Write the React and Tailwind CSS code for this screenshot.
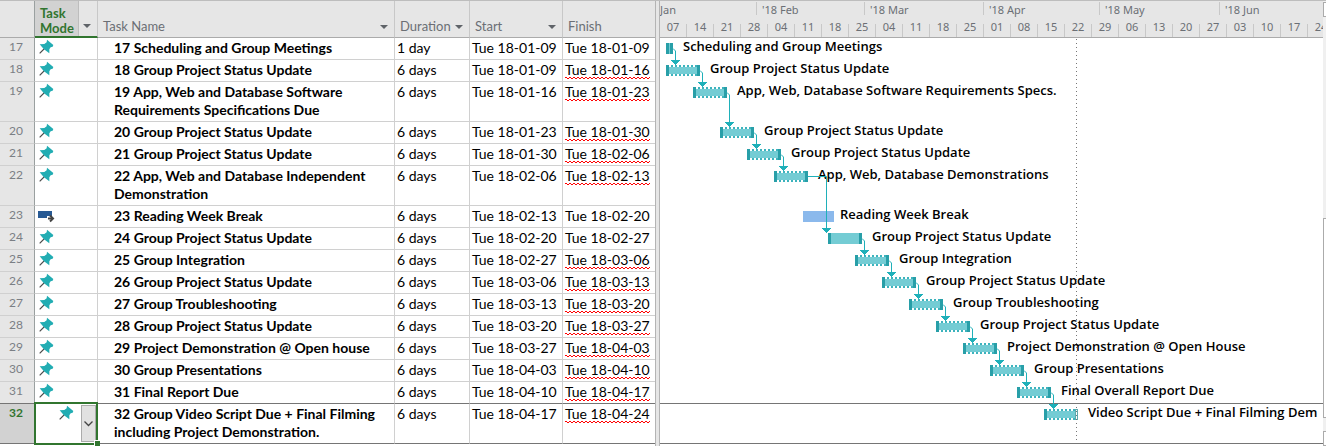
import React from "react";

const TASKS = [
  { id: 17, name: "17 Scheduling and Group Meetings", days: "1 day", start: "Tue 18-01-09", finish: "Tue 18-01-09", x: 6, w: 7, kind: "short", label: "Scheduling and Group Meetings" },
  { id: 18, name: "18 Group Project Status Update", days: "6 days", start: "Tue 18-01-09", finish: "Tue 18-01-16", warn: true, x: 6, w: 34, kind: "dotted", label: "Group Project Status Update" },
  { id: 19, name: "19 App, Web and Database Software Requirements Specifications Due", tall: true, days: "6 days", start: "Tue 18-01-16", finish: "Tue 18-01-23", warn: true, x: 33, w: 34, kind: "dotted", label: "App, Web, Database Software Requirements Specs." },
  { id: 20, name: "20 Group Project Status Update", days: "6 days", start: "Tue 18-01-23", finish: "Tue 18-01-30", warn: true, x: 60, w: 34, kind: "dotted", label: "Group Project Status Update" },
  { id: 21, name: "21 Group Project Status Update", days: "6 days", start: "Tue 18-01-30", finish: "Tue 18-02-06", warn: true, x: 87, w: 34, kind: "dotted", label: "Group Project Status Update" },
  { id: 22, name: "22 App, Web and Database Independent Demonstration", tall: true, days: "6 days", start: "Tue 18-02-06", finish: "Tue 18-02-13", warn: true, x: 114, w: 34, kind: "dotted", label: "App, Web, Database Demonstrations" },
  { id: 23, name: "23 Reading Week Break", auto: true, days: "6 days", start: "Tue 18-02-13", finish: "Tue 18-02-20", x: 143, w: 31, kind: "auto", label: "Reading Week Break" },
  { id: 24, name: "24 Group Project Status Update", days: "6 days", start: "Tue 18-02-20", finish: "Tue 18-02-27", x: 168, w: 34, kind: "solid", label: "Group Project Status Update" },
  { id: 25, name: "25 Group Integration", days: "6 days", start: "Tue 18-02-27", finish: "Tue 18-03-06", warn: true, x: 195, w: 34, kind: "dotted", label: "Group Integration" },
  { id: 26, name: "26 Group Project Status Update", days: "6 days", start: "Tue 18-03-06", finish: "Tue 18-03-13", warn: true, x: 222, w: 34, kind: "dotted", label: "Group Project Status Update" },
  { id: 27, name: "27 Group Troubleshooting", days: "6 days", start: "Tue 18-03-13", finish: "Tue 18-03-20", warn: true, x: 249, w: 34, kind: "dotted", label: "Group Troubleshooting" },
  { id: 28, name: "28 Group Project Status Update", days: "6 days", start: "Tue 18-03-20", finish: "Tue 18-03-27", warn: true, x: 276, w: 34, kind: "dotted", label: "Group Project Status Update" },
  { id: 29, name: "29 Project Demonstration @ Open house", days: "6 days", start: "Tue 18-03-27", finish: "Tue 18-04-03", warn: true, x: 303, w: 34, kind: "dotted", label: "Project Demonstration @ Open House" },
  { id: 30, name: "30 Group Presentations", days: "6 days", start: "Tue 18-04-03", finish: "Tue 18-04-10", warn: true, x: 330, w: 34, kind: "dotted", label: "Group Presentations" },
  { id: 31, name: "31 Final Report Due", days: "6 days", start: "Tue 18-04-10", finish: "Tue 18-04-17", warn: true, x: 357, w: 34, kind: "dotted", label: "Final Overall Report Due" },
  { id: 32, name: "32 Group Video Script Due + Final Filming including Project Demonstration.", tall: true, selected: true, days: "6 days", start: "Tue 18-04-17", finish: "Tue 18-04-24", warn: true, x: 384, w: 34, kind: "open", label: "Video Script Due + Final Filming Dem" },
];

const MONTHS = [
  ["Jan", "w-[96px]"],
  ["'18 Feb", "w-[108px]"],
  ["'18 Mar", "w-[119px]"],
  ["'18 Apr", "w-[116px]"],
  ["'18 May", "w-[120px]"],
  ["'18 Jun", "w-[120px]"],
];

const WEEKS = ["07", "14", "21", "28", "04", "11", "18", "25", "04", "11", "18", "25", "01", "08", "15", "22", "29", "06", "13", "20", "27", "03", "10", "17", "24"];

const rowHeight = (t) => (t.tall ? 40 : 22);
const TOPS = TASKS.reduce((tops, t) => [...tops, tops[tops.length - 1] + rowHeight(t)], [0]);

// Finish-to-start links as pairs of task ids; the break week is skipped.
const LINKS = TASKS.slice(1)
  .filter((t) => !t.auto)
  .map((t) => [t.id === 24 ? 22 : t.id - 1, t.id]);

function Pin({ className = "" }) {
  return (
    <svg className={`block ${className}`} width="16" height="16" viewBox="0 0 48 48" aria-label="Manually scheduled" role="img">
      <path d="M5 43L21 27" stroke="#4a4a4a" strokeWidth="3.5" />
      <path d="M27 2L46 18L44 23L38 25L34 31L34 43L22 34L17 30L5 16L19 15L26 10Z" fill="#22adb3" />
    </svg>
  );
}

function AutoIcon() {
  return (
    <svg className="block" width="17" height="12" viewBox="0 0 17 12" aria-label="Auto scheduled" role="img">
      <path d="M0 0H14V5H9V7H0Z" fill="#285a94" />
      <path d="M10 7.500H15" stroke="#444" strokeWidth="2" />
      <path d="M12 4.500L15 7.500L12 10.500" fill="none" stroke="#444" strokeWidth="2" />
    </svg>
  );
}

function FilterButton({ label }) {
  return (
    <button type="button" aria-label={label} className="mb-[6px] mr-[6px] flex h-2 w-2 shrink-0 items-center justify-center">
      <svg width="8" height="4" viewBox="0 0 8 4"><path d="M0 0H8L4 4Z" fill="#5f6368" /></svg>
    </button>
  );
}

function HeaderCell({ children, last }) {
  return (
    <th scope="col" className={`border-b border-b-[#ababab] p-0 font-normal ${last ? "" : "border-r border-r-[#c8c8c8]"}`}>
      <div className="flex h-9 items-end justify-between pl-[5px]">
        <span className="mb-[2px] leading-[18px]">{children}</span>
        {!last && <FilterButton label={`Filter ${children}`} />}
      </div>
    </th>
  );
}

function TaskRow({ task, darkLine }) {
  const line = darkLine ? "border-b-[#757575]" : "border-b-[#d0d0d0]";
  const cell = `whitespace-nowrap border-b border-r border-r-[#d0d0d0] p-0 pt-px pl-[2px] ${line}`;
  return (
    <tr className={`align-top ${task.tall ? "h-10" : "h-[22px]"}`}>
      <th
        scope="row"
        className={`border-b border-r border-r-[#9aa0a0] p-0 pr-[11px] text-right text-[12px] leading-[18px] ${line} ${
          task.selected ? "bg-[#d2d2d2] font-bold text-[#31752f]" : "bg-[#e6e6e6] font-normal text-[#7b7f85]"
        }`}
      >
        {task.id}
      </th>
      <td className={`relative border-b border-r border-r-[#d0d0d0] p-0 ${line}`}>
        {task.selected ? (
          <>
            <div className="flex h-[39px] justify-end gap-[7px] pr-px">
              <Pin className="mt-[1px]" />
              <button type="button" aria-label="Choose task mode" className="mt-px flex h-[37px] w-[15px] items-center justify-center border border-[#ababab] bg-[#e1e1e1]">
                <svg width="9" height="6" viewBox="0 0 9 6"><path d="M0.500 0.500L4.500 4.500L8.500 0.500" fill="none" stroke="#444" strokeWidth="1.300" /></svg>
              </button>
            </div>
            <div className="pointer-events-none absolute -inset-x-px -top-[2px] -bottom-[2px] border-2 border-[#31752f]" />
            <div className="absolute -right-[3px] -bottom-[3px] h-[6px] w-[6px] border-l border-t border-white bg-[#31752f]" />
          </>
        ) : (
          <div className={task.auto ? "pl-[3px] pt-[5px]" : "pl-[3px] pt-px"}>{task.auto ? <AutoIcon /> : <Pin />}</div>
        )}
      </td>
      <td className={`border-b border-r border-r-[#d0d0d0] p-0 pt-px pl-4 font-bold ${line}`}>{task.name}</td>
      <td className={cell}>{task.days}</td>
      <td className={cell}>{task.start}</td>
      <td className={`whitespace-nowrap border-b p-0 pt-px pl-[2px] ${line}`}>
        <span
          className={
            task.warn
              ? "block w-fit bg-[repeating-linear-gradient(90deg,#f00_0_2px,transparent_2px_4px),repeating-linear-gradient(90deg,transparent_0_2px,#f00_2px_4px)] bg-[length:100%_1px] bg-[position:0_16px,0_17px] bg-no-repeat"
              : "block w-fit"
          }
        >
          {task.finish}
        </span>
      </td>
    </tr>
  );
}

function Bar({ task }) {
  const size = { width: task.w };
  if (task.kind === "auto") return <div className="h-[11px] shrink-0 bg-[#8bb9ec]" style={size} />;
  if (task.kind === "short")
    return <div className="h-[11px] shrink-0 border-x-[3px] border-[#289fa8] bg-[#74ccd4]" style={size} />;
  const teeth = "h-[2px] bg-[repeating-linear-gradient(90deg,transparent_0_2px,#3db3bd_2px_4px)]";
  return (
    <div className="flex h-[11px] shrink-0" style={size}>
      <div className="w-[3px] bg-[#289fa8]" />
      {task.kind === "solid" ? (
        <div className="flex-1 bg-[#74ccd4]" />
      ) : (
        <div className="flex flex-1 flex-col">
          <div className={teeth} />
          <div className="flex-1 bg-[#74ccd4]" />
          <div className={teeth} />
        </div>
      )}
      <div className={task.kind === "open" ? "w-[3px] border border-[#5fa9ae] bg-white" : "w-[3px] bg-[#289fa8]"} />
    </div>
  );
}

function Links() {
  const byId = (id) => TASKS.findIndex((t) => t.id === id);
  return (
    <svg className="pointer-events-none absolute left-0 top-0 h-full w-full" aria-hidden="true">
      {LINKS.map(([from, to]) => {
        const a = byId(from);
        const b = byId(to);
        const x0 = TASKS[a].x + TASKS[a].w;
        const y0 = TOPS[a] + 10;
        const far = b - a > 1;
        const x = x0 + (far ? 18 : 2) + 0.5;
        const tip = TOPS[b] + 5;
        const d = far
          ? `M${x0} ${y0 + 0.5}H${x}V${tip - 4}`
          : `M${x0} ${y0 + 0.5}L${x} ${y0 + 3}V${tip - 4}`;
        return (
          <g key={to}>
            <path d={d} fill="none" stroke="#1fb0b9" strokeWidth="1" />
            <path d={`M${x - 5} ${tip - 5}H${x + 5}L${x} ${tip + 0.5}Z`} fill="#1fb0b9" shapeRendering="crispEdges" />
          </g>
        );
      })}
    </svg>
  );
}

function TaskTable() {
  return (
    <table className="w-[655px] shrink-0 table-fixed border-separate border-spacing-0 self-start text-left text-[14px] leading-[18px] text-black">
      <colgroup>
        <col className="w-[35px]" />
        <col className="w-[63px]" />
        <col />
        <col className="w-[75px]" />
        <col className="w-[93px]" />
        <col className="w-[92px]" />
      </colgroup>
      <thead className="bg-[#e6e6e6] text-[13px] text-[#6b6f75]">
        <tr>
          <td className="border-b border-r border-b-[#ababab] border-r-[#9aa0a0] p-0" />
          <th scope="col" className="border-b-2 border-r border-b-[#31752f] border-r-[#c8c8c8] p-0 font-bold">
            <div className="flex h-[35px] items-end justify-between">
              <span className="h-full w-11 border-r border-[#bdbdbd] bg-[#d2d2d2] pl-[5px] pt-[5px] leading-[15px] text-[#31752f]">Task Mode</span>
              <FilterButton label="Filter Task Mode" />
            </div>
          </th>
          <HeaderCell>Task Name</HeaderCell>
          <HeaderCell>Duration</HeaderCell>
          <HeaderCell>Start</HeaderCell>
          <HeaderCell last>Finish</HeaderCell>
        </tr>
      </thead>
      <tbody>
        {TASKS.map((t, i) => (
          <TaskRow key={t.id} task={t} darkLine={t.selected || TASKS[i + 1]?.selected} />
        ))}
      </tbody>
    </table>
  );
}

function GanttChart() {
  return (
    <section aria-label="Gantt chart" className="min-w-0 flex-1 overflow-hidden">
      <div className="h-[37px] overflow-hidden border-b border-[#ababab] bg-[#e6e6e6] font-['Noto_Sans',sans-serif] text-[11px] leading-[18px] text-[#6b6f75]">
        <div className="flex h-[18px]">
          {MONTHS.map(([name, width], i) => (
            <div key={name} className={`flex shrink-0 ${width}`}>
              {i > 0 && <span className="mr-[5px] mt-px h-[13px] w-px bg-[#c8c8c8]" />}
              <span>{name}</span>
            </div>
          ))}
        </div>
        <div className="flex h-[18px]">
          {WEEKS.map((w, i) => (
            <div key={i} className="flex w-[27px] shrink-0 items-end">
              <span className="flex-1 pb-px text-center">{w}</span>
              <span className="h-[13px] w-px bg-[#c8c8c8]" />
            </div>
          ))}
        </div>
      </div>
      <div className="relative">
        <div className="absolute bottom-px left-[416px] top-px w-px bg-[repeating-linear-gradient(180deg,#777_0_1px,transparent_1px_4px)]" />
        {TASKS.map((t, i) => (
          <div
            key={t.id}
            className={`flex items-start overflow-hidden whitespace-nowrap ${t.tall ? "h-10" : "h-[22px]"} ${
              t.selected || TASKS[i + 1]?.selected ? "border-b border-[#757575]" : ""
            }`}
          >
            <div className="flex pt-[5px]" style={{ marginLeft: t.x }}>
              <Bar task={t} />
            </div>
            <span className={`font-['Open_Sans',sans-serif] text-[13px] font-semibold leading-[16px] text-black ${t.auto ? "ml-[6px]" : "ml-[10px]"}`}>{t.label}</span>
          </div>
        ))}
        <Links />
      </div>
    </section>
  );
}

export default function App() {
  return (
    <main className="flex min-h-screen border-t border-[#bdbdbd] bg-white font-['Lato',sans-serif]">
      <TaskTable />
      <div className="w-[5px] shrink-0 border-x border-[#b4b4b4] bg-[#e6e6e6]" />
      <GanttChart />
      <div className="flex w-[3px] shrink-0 flex-col bg-[#f0f0f0]">
        <div className="mt-px h-[15px] border border-r-0 border-[#ababab] bg-white" />
        <div className="h-[201px]" />
        <div className="h-[200px] border border-r-0 border-[#ababab] bg-white" />
        <div className="h-[13px]" />
        <div className="flex-1 border border-r-0 border-[#ababab] bg-white" />
      </div>
    </main>
  );
}
